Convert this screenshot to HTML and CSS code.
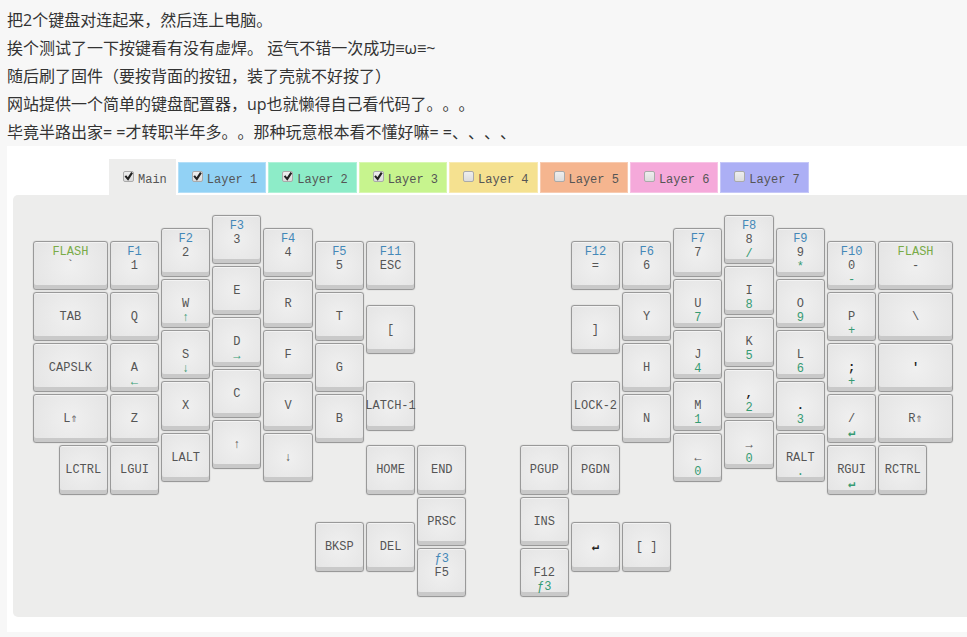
FILE: index.html
```html
<!DOCTYPE html>
<html lang="zh-CN">
<head>
<meta charset="utf-8">
<title>键盘配置器</title>
<link rel="stylesheet" href="styles.css">
</head>
<body>
<main class="post">
<div class="prose">
<p>把2个键盘对连起来，然后连上电脑。</p>
<p>挨个测试了一下按键看有没有虚焊。 运气不错一次成功≡ω≡~</p>
<p>随后刷了固件（要按背面的按钮，装了壳就不好按了）</p>
<p>网站提供一个简单的键盘配置器，up也就懒得自己看代码了。。。</p>
<p>毕竟半路出家= =才转职半年多。。那种玩意根本看不懂好嘛= =、、、、</p>
</div>
<section class="configurator">
<div class="tabs">
<label class="tab main"><input type="checkbox" checked>Main</label>
<label class="tab l1"><input type="checkbox" checked>Layer 1</label>
<label class="tab l2"><input type="checkbox" checked>Layer 2</label>
<label class="tab l3"><input type="checkbox" checked>Layer 3</label>
<label class="tab l4"><input type="checkbox">Layer 4</label>
<label class="tab l5"><input type="checkbox">Layer 5</label>
<label class="tab l6"><input type="checkbox">Layer 6</label>
<label class="tab l7"><input type="checkbox">Layer 7</label>
</div>
<div class="panel">
<div class="board">
<!-- left half -->
<button class="key wide x1 y3"><span class="flash">FLASH</span><b>`</b></button>
<button class="key wide x1 y7"><b>TAB</b></button>
<button class="key wide x1 y11"><b>CAPSLK</b></button>
<button class="key wide x1 y15"><b>L⇑</b></button>
<button class="key x2 y19"><b>LCTRL</b></button>

<button class="key x4 y3"><span class="fn">F1</span><b>1</b></button>
<button class="key x4 y7"><b>Q</b></button>
<button class="key x4 y11"><b>A</b><span class="alt">←</span></button>
<button class="key x4 y15"><b>Z</b></button>
<button class="key x4 y19"><b>LGUI</b></button>

<button class="key x6 y2"><span class="fn">F2</span><b>2</b></button>
<button class="key x6 y6"><b>W</b><span class="alt">↑</span></button>
<button class="key x6 y10"><b>S</b><span class="alt">↓</span></button>
<button class="key x6 y14"><b>X</b></button>
<button class="key x6 y18"><b>LALT</b></button>

<button class="key x8 y1"><span class="fn">F3</span><b>3</b></button>
<button class="key x8 y5"><b>E</b></button>
<button class="key x8 y9"><b>D</b><span class="alt">→</span></button>
<button class="key x8 y13"><b>C</b></button>
<button class="key x8 y17"><b>↑</b></button>

<button class="key x10 y2"><span class="fn">F4</span><b>4</b></button>
<button class="key x10 y6"><b>R</b></button>
<button class="key x10 y10"><b>F</b></button>
<button class="key x10 y14"><b>V</b></button>
<button class="key x10 y18"><b>↓</b></button>

<button class="key x12 y3"><span class="fn">F5</span><b>5</b></button>
<button class="key x12 y7"><b>T</b></button>
<button class="key x12 y11"><b>G</b></button>
<button class="key x12 y15"><b>B</b></button>
<button class="key x12 y25"><b>BKSP</b></button>

<button class="key x14 y3"><span class="fn">F11</span><b>ESC</b></button>
<button class="key x14 y8"><b>[</b></button>
<button class="key x14 y14"><b>LATCH-1</b></button>
<button class="key x14 y19"><b>HOME</b></button>
<button class="key x14 y25"><b>DEL</b></button>

<button class="key x16 y19"><b>END</b></button>
<button class="key x16 y23"><b>PRSC</b></button>
<button class="key x16 y27"><span class="fn">ƒ3</span><b>F5</b></button>

<!-- right half -->
<button class="key x20 y19"><b>PGUP</b></button>
<button class="key x20 y23"><b>INS</b></button>
<button class="key x20 y27"><b>F12</b><span class="alt">ƒ3</span></button>

<button class="key x22 y3"><span class="fn">F12</span><b>=</b></button>
<button class="key x22 y8"><b>]</b></button>
<button class="key x22 y14"><b>LOCK-2</b></button>
<button class="key x22 y19"><b>PGDN</b></button>
<button class="key x22 y25"><b class="dark">↵</b></button>

<button class="key x24 y3"><span class="fn">F6</span><b>6</b></button>
<button class="key x24 y7"><b>Y</b></button>
<button class="key x24 y11"><b>H</b></button>
<button class="key x24 y15"><b>N</b></button>
<button class="key x24 y25"><b>[ ]</b></button>

<button class="key x26 y2"><span class="fn">F7</span><b>7</b></button>
<button class="key x26 y6"><b>U</b><span class="alt">7</span></button>
<button class="key x26 y10"><b>J</b><span class="alt">4</span></button>
<button class="key x26 y14"><b>M</b><span class="alt">1</span></button>
<button class="key x26 y18"><b>←</b><span class="alt">0</span></button>

<button class="key x28 y1"><span class="fn">F8</span><b>8</b><span class="alt">/</span></button>
<button class="key x28 y5"><b>I</b><span class="alt">8</span></button>
<button class="key x28 y9"><b>K</b><span class="alt">5</span></button>
<button class="key x28 y13"><b class="dark">,</b><span class="alt">2</span></button>
<button class="key x28 y17"><b>→</b><span class="alt">0</span></button>

<button class="key x30 y2"><span class="fn">F9</span><b>9</b><span class="alt">*</span></button>
<button class="key x30 y6"><b>O</b><span class="alt">9</span></button>
<button class="key x30 y10"><b>L</b><span class="alt">6</span></button>
<button class="key x30 y14"><b class="dark">.</b><span class="alt">3</span></button>
<button class="key x30 y18"><b>RALT</b><span class="alt">.</span></button>

<button class="key x32 y3"><span class="fn">F10</span><b>0</b><span class="alt">-</span></button>
<button class="key x32 y7"><b>P</b><span class="alt">+</span></button>
<button class="key x32 y11"><b class="dark">;</b><span class="alt">+</span></button>
<button class="key x32 y15"><b>/</b><span class="alt strong">↵</span></button>
<button class="key x32 y19"><b>RGUI</b><span class="alt strong">↵</span></button>

<button class="key wide x34 y3"><span class="flash">FLASH</span><b>-</b></button>
<button class="key wide x34 y7"><b>\</b></button>
<button class="key wide x34 y11"><b class="dark">'</b></button>
<button class="key wide x34 y15"><b>R⇑</b></button>
<button class="key x34 y19"><b>RCTRL</b></button>
</div>
</div>
</section>
</main>
</body>
</html>
```
FILE: styles.css
```css
* { box-sizing: border-box; }

body {
  margin: 0;
  background: #f7f7f7;
  color: #333;
}

.post { padding: 6px 0 5px 7px; }

.prose {
  font: 300 16px/28px "Open Sans", "Liberation Sans", "Noto Sans CJK SC", sans-serif;
  font-weight: 400;
  font-kerning: none;
  text-spacing-trim: space-all;
}

.prose p { margin: 0; }

.configurator {
  background: #fff;
  padding: 13px 0 15px 6px;
  font: 12px/14px "Liberation Mono", monospace;
}

/* Layer tabs */
.tabs {
  display: flex;
  align-items: flex-start;
  gap: 2px;
  padding-left: 96px;
}

.tab {
  display: flex;
  align-items: center;
  gap: 4px;
  height: 31px;
  margin: 3px 0 2px;
  padding: 4px 8px 0 13px;
  border: 1px solid rgba(255, 255, 255, 0.3);
  color: #555;
  white-space: nowrap;
}

.tab.main {
  height: 36px;
  margin: 0;
  padding: 5px 9px 0 14px;
  border: 0;
  background: #ededec;
}

.l1 { background: #92d2f5; }
.l2 { background: #8decc8; }
.l3 { background: #c7f48e; }
.l4 { background: #f5e190; }
.l5 { background: #f5b58f; }
.l6 { background: #f5a9da; }
.l7 { background: #acaff5; }

.tab input {
  appearance: none;
  width: 11px;
  height: 11px;
  margin: 0 0 6px;
  border: 1px solid #aaa;
  border-radius: 2px;
  background: linear-gradient(#eee, #dcdcdc);
}

.tab input:checked::before {
  content: "";
  display: block;
  width: 9px;
  height: 9px;
  background: #222;
  clip-path: polygon(6% 50%, 24% 36%, 42% 58%, 80% 0, 100% 14%, 46% 96%);
}

/* Key layout: columns are half a key wide, rows a quarter of a key tall */
.panel {
  padding: 19px 13px 19px 19px;
  border-radius: 5px 0 0 5px;
  background: #ededec;
}

.board {
  display: grid;
  grid-template-columns: repeat(36, minmax(0, 1fr));
  grid-template-rows: repeat(30, minmax(0, 1fr));
  aspect-ratio: 12 / 5;
}

.key {
  grid-column-end: span 2;
  grid-row-end: span 4;
  display: grid;
  grid-template-rows: repeat(3, 14px);
  justify-content: center;
  justify-items: center;
  align-content: start;
  min-width: 0;
  min-height: 0;
  margin: 1px;
  padding: 3px 0 0;
  border: 1px solid #999;
  border-radius: 3px;
  background: radial-gradient(circle, #f0f0f0, #e4e4e4);
  box-shadow: inset 0 -4px #c9c9c9, inset 0 1px #f3f3f3, 0 0 1px #999;
  color: #555;
  font: inherit;
  white-space: nowrap;
}

.key.wide { grid-column-end: span 3; }

.key b { grid-row: 2; font-weight: normal; }
.key .dark { color: #222; font-weight: bold; }
.fn, .flash { grid-row: 1; }
.fn { color: #4488b8; }
.flash { color: #79ab48; }
.alt { grid-row: 3; color: #369b73; }
.strong { font-weight: bold; }

.x1 { grid-column-start: 1; }
.x2 { grid-column-start: 2; }
.x4 { grid-column-start: 4; }
.x6 { grid-column-start: 6; }
.x8 { grid-column-start: 8; }
.x10 { grid-column-start: 10; }
.x12 { grid-column-start: 12; }
.x14 { grid-column-start: 14; }
.x16 { grid-column-start: 16; }
.x20 { grid-column-start: 20; }
.x22 { grid-column-start: 22; }
.x24 { grid-column-start: 24; }
.x26 { grid-column-start: 26; }
.x28 { grid-column-start: 28; }
.x30 { grid-column-start: 30; }
.x32 { grid-column-start: 32; }
.x34 { grid-column-start: 34; }

.y1 { grid-row-start: 1; }
.y2 { grid-row-start: 2; }
.y3 { grid-row-start: 3; }
.y5 { grid-row-start: 5; }
.y6 { grid-row-start: 6; }
.y7 { grid-row-start: 7; }
.y8 { grid-row-start: 8; }
.y9 { grid-row-start: 9; }
.y10 { grid-row-start: 10; }
.y11 { grid-row-start: 11; }
.y13 { grid-row-start: 13; }
.y14 { grid-row-start: 14; }
.y15 { grid-row-start: 15; }
.y17 { grid-row-start: 17; }
.y18 { grid-row-start: 18; }
.y19 { grid-row-start: 19; }
.y23 { grid-row-start: 23; }
.y25 { grid-row-start: 25; }
.y27 { grid-row-start: 27; }
```
